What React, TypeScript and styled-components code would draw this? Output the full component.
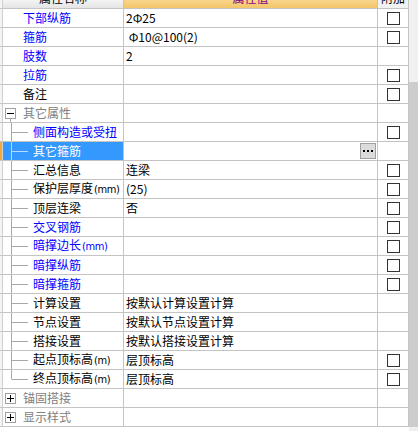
import React from 'react';
import styled, { createGlobalStyle } from 'styled-components';

type Kind = 'top' | 'group' | 'child';

interface IRow {
  name: string;
  unit?: string;
  value?: string;
  kind: Kind;
  blue?: boolean;
  check?: boolean;
  open?: boolean;
  last?: boolean;
  selected?: boolean;
}

const ROWS: IRow[] = [
  { name: '下部纵筋', value: '2Φ25', kind: 'top', blue: true, check: true },
  { name: '箍筋', value: ' Φ10@100(2)', kind: 'top', blue: true, check: true },
  { name: '肢数', value: '2', kind: 'top', blue: true },
  { name: '拉筋', kind: 'top', blue: true, check: true },
  { name: '备注', kind: 'top', check: true },
  { name: '其它属性', kind: 'group', open: true },
  { name: '侧面构造或受扭', kind: 'child', blue: true, check: true },
  { name: '其它箍筋', kind: 'child', blue: true, selected: true },
  { name: '汇总信息', value: '连梁', kind: 'child', check: true },
  { name: '保护层厚度', unit: '(mm)', value: '(25)', kind: 'child', check: true },
  { name: '顶层连梁', value: '否', kind: 'child', check: true },
  { name: '交叉钢筋', kind: 'child', blue: true, check: true },
  { name: '暗撑边长', unit: '(mm)', kind: 'child', blue: true, check: true },
  { name: '暗撑纵筋', kind: 'child', blue: true, check: true },
  { name: '暗撑箍筋', kind: 'child', blue: true, check: true },
  { name: '计算设置', value: '按默认计算设置计算', kind: 'child' },
  { name: '节点设置', value: '按默认节点设置计算', kind: 'child' },
  { name: '搭接设置', value: '按默认搭接设置计算', kind: 'child' },
  { name: '起点顶标高', unit: '(m)', value: '层顶标高', kind: 'child', check: true },
  { name: '终点顶标高', unit: '(m)', value: '层顶标高', kind: 'child', check: true, last: true },
  { name: '锚固搭接', kind: 'group' },
  { name: '显示样式', kind: 'group' },
];

const GlobalStyle = createGlobalStyle`
  html, body {
    margin: 0;
    padding: 0;
    background: #ffffff;
  }
  body {
    font-family: "Noto Sans CJK SC", "DejaVu Sans", sans-serif;
    font-size: 12px;
  }
`;

const STDPage = styled.div`
  display: flex;
  width: 418px;
  height: 431px;
  overflow: hidden;
  background: #ffffff;
`;

const STDTable = styled.div`
  display: grid;
  grid-template-columns: 3px 121px 254px 31px;
  grid-auto-rows: 19px;
  grid-template-rows: 9px;
  width: 409px;
  align-content: start;
`;

const STDCell = styled.div`
  box-sizing: border-box;
  border-right: 1px solid #c4c4c4;
  border-bottom: 1px solid #c4c4c4;
  display: flex;
  align-items: center;
  overflow: hidden;
  white-space: pre;
  line-height: 18px;
`;

const STDHeadCell = styled(STDCell)<{ tone: 'gray' | 'orange' | 'plain' }>`
  justify-content: center;
  align-items: flex-end;
  background: ${({ tone }) =>
    tone === 'orange'
      ? 'linear-gradient(#f9d58c, #f4c56a)'
      : tone === 'gray'
      ? 'linear-gradient(#f4f4f4, #e4e4e4)'
      : '#f2f2f2'};
  color: ${({ tone }) => (tone === 'orange' ? '#800080' : '#000000')};

  span {
    display: block;
    line-height: 17px;
    margin-bottom: 2px;
  }
`;

const STDMarker = styled(STDCell)<{ active?: boolean }>`
  background: ${({ active }) => (active ? '#f2a93b' : '#f4f4f4')};
  border-right-color: #d0d0d0;
`;

const STDNameCell = styled(STDCell)<{ selected?: boolean }>`
  background: ${({ selected }) => (selected ? '#3399ff' : '#ffffff')};
`;

const STDLabel = styled.span<{ tone: 'blue' | 'black' | 'gray' | 'white' }>`
  color: ${({ tone }) =>
    tone === 'blue'
      ? '#0000ff'
      : tone === 'gray'
      ? '#808080'
      : tone === 'white'
      ? '#ffffff'
      : '#000000'};
`;

const STDUnit = styled.span`
  font-family: "DejaVu Sans Condensed", "DejaVu Sans", sans-serif;
  font-size: 11px;
  letter-spacing: -0.4px;
  margin-left: 1px;
`;

const STDTopIndent = styled.span`
  width: 20px;
  flex-shrink: 0;
`;

const STDToggleWrap = styled.span`
  position: relative;
  display: flex;
  align-self: stretch;
  align-items: center;
  margin: 0 7px 0 2px;
  flex-shrink: 0;
`;

const STDToggle = styled.span`
  box-sizing: border-box;
  width: 11px;
  height: 11px;
  border: 1px solid #a0a0a0;
  background: #ffffff;
  display: flex;
  align-items: center;
  justify-content: center;
`;

const STDToggleStem = styled.span`
  position: absolute;
  left: 5px;
  top: 14px;
  width: 1px;
  height: 5px;
  background: #a8a8a8;
`;

const STDConnector = styled.svg`
  flex-shrink: 0;
  width: 30px;
  height: 18px;
  align-self: flex-start;
`;

const STDValueCell = styled(STDCell)`
  padding-left: 2px;
  justify-content: space-between;
`;

const STDMoreButton = styled.span`
  box-sizing: border-box;
  width: 16px;
  height: 16px;
  margin-right: 1px;
  border: 1px solid #a0a0a0;
  background: #dcdcdc;
  display: flex;
  align-items: center;
  justify-content: center;
  gap: 2px;

  i {
    width: 2px;
    height: 2px;
    background: #000000;
  }
`;

const STDCheckCell = styled(STDCell)`
  justify-content: center;
`;

const STDCheckbox = styled.span`
  box-sizing: border-box;
  width: 13px;
  height: 13px;
  margin-left: 1px;
  border: 1px solid #333333;
  background: #ffffff;
`;

const STDScroll = styled.div`
  width: 9px;
  display: flex;
  flex-direction: column;
  background: #f0f0f0;
`;

const STDThumb = styled.div`
  margin-top: 82px;
  height: 345px;
  background: #cdcdcd;
`;

const Toggle: React.FC<{ open?: boolean }> = ({ open }) => (
  <STDToggleWrap>
    <STDToggle>
      <svg width="9" height="9" viewBox="0 0 9 9">
        <line x1="1" y1="4.5" x2="8" y2="4.5" stroke="#000" strokeWidth="1" />
        {!open && <line x1="4.5" y1="1" x2="4.5" y2="8" stroke="#000" strokeWidth="1" />}
      </svg>
    </STDToggle>
    {open && <STDToggleStem />}
  </STDToggleWrap>
);

const Connector: React.FC<{ last?: boolean; selected?: boolean }> = ({ last, selected }) => {
  const color = selected ? '#b8d8ff' : '#a8a8a8';
  return (
    <STDConnector viewBox="0 0 30 18">
      <line x1="8.5" y1="0" x2="8.5" y2={last ? 9.5 : 19} stroke={color} strokeWidth="1" />
      <line x1="9" y1="9.5" x2="25" y2="9.5" stroke={color} strokeWidth="1" />
    </STDConnector>
  );
};

const App: React.FC = () => {
  return (
    <>
      <GlobalStyle />
      <STDPage>
        <STDTable>
          <STDMarker />
          <STDHeadCell tone="gray">
            <span>属性名称</span>
          </STDHeadCell>
          <STDHeadCell tone="orange">
            <span>属性值</span>
          </STDHeadCell>
          <STDHeadCell tone="plain">
            <span>附加</span>
          </STDHeadCell>

          {ROWS.map((row) => {
            const tone = row.selected
              ? 'white'
              : row.kind === 'group'
              ? 'gray'
              : row.blue
              ? 'blue'
              : 'black';
            return (
              <React.Fragment key={row.name}>
                <STDMarker active={row.selected} />
                <STDNameCell selected={row.selected}>
                  {row.kind === 'top' && <STDTopIndent />}
                  {row.kind === 'group' && <Toggle open={row.open} />}
                  {row.kind === 'child' && (
                    <Connector last={row.last} selected={row.selected} />
                  )}
                  <STDLabel tone={tone}>
                    {row.name}
                    {row.unit && <STDUnit>{row.unit}</STDUnit>}
                  </STDLabel>
                </STDNameCell>
                <STDValueCell>
                  <span>{row.value ?? ''}</span>
                  {row.selected && (
                    <STDMoreButton>
                      <i />
                      <i />
                      <i />
                    </STDMoreButton>
                  )}
                </STDValueCell>
                <STDCheckCell>{row.check && <STDCheckbox />}</STDCheckCell>
              </React.Fragment>
            );
          })}
        </STDTable>
        <STDScroll>
          <STDThumb />
        </STDScroll>
      </STDPage>
    </>
  );
};

export default App;
